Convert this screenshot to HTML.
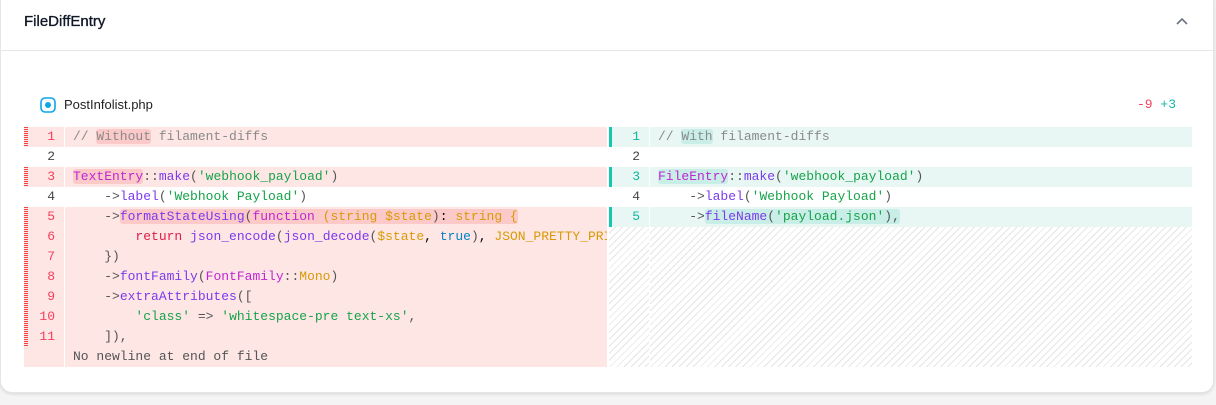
<!DOCTYPE html>
<html><head><meta charset="utf-8"><style>
*{box-sizing:border-box;margin:0;padding:0}
body{width:1216px;height:405px;background:#f4f4f5;font-family:"Liberation Sans",sans-serif;position:relative;overflow:hidden}
.card{position:absolute;left:0;top:-10px;width:1214px;height:403px;background:#fff;border-radius:12px;box-shadow:0 1px 3px rgba(0,0,0,.12);border:1px solid #e5e5e5}
.title{position:absolute;left:24px;top:12px;font-size:15px;color:#111827;-webkit-text-stroke:0.35px #111827}
.hr{position:absolute;left:0;right:0;top:50px;border-top:1px solid #e5e7eb}
.mono{font-family:"Liberation Mono",monospace;font-size:13px}
.row{position:absolute;height:20px;line-height:20px;white-space:pre}
.num{position:absolute;text-align:right;height:20px;line-height:20px;font-family:"Liberation Mono",monospace;font-size:13px}
.c{color:#8a8a8a}.p{color:#c026d3}.v{color:#7c3aed}.g{color:#16a34a}.o{color:#d99a06}.r{color:#e11d48}.b{color:#0284c7}.d{color:#555}
.hl{background:#fcc9c9;border-radius:3px}.hg{background:#c8eee7;border-radius:3px}
.hatch{position:absolute;background:repeating-linear-gradient(135deg,#fff 0 4px,#e5e5e5 4px 5px)}
</style></head><body>
<div class="card"></div>
<div class="title" style="top:13px">FileDiffEntry</div>
<svg style="position:absolute;left:1175px;top:15px" width="14" height="12"><path d="M2 9 L7 4 L12 9" stroke="#6b7280" stroke-width="1.6" fill="none"/></svg>
<div class="hr"></div>
<svg style="position:absolute;left:40px;top:97px" width="16" height="16"><rect x="1" y="1" width="14" height="14" rx="4" fill="none" stroke="#0ea5e9" stroke-width="1.6"/><circle cx="8" cy="8" r="3" fill="#0ea5e9"/></svg>
<div style="position:absolute;left:64px;top:97px;font-size:13px;color:#222">PostInfolist.php</div>
<div class="mono" style="position:absolute;left:1137px;top:97px"><span style="color:#f43f5e">-9</span> <span style="color:#14b8a6">+3</span></div>

<div id="L"></div>
<script>
var L=[1,0,1,0,1,1,1,1,1,1,1,1];
var h='';
for(var i=0;i<12;i++){var y=127+i*20;
 if(L[i]){h+='<div style="position:absolute;left:24px;top:'+y+'px;width:40px;height:20px;background:#fde6e4"></div><div style="position:absolute;left:65px;top:'+y+'px;width:542px;height:20px;background:#fde6e4"></div>';
 if(i<11)h+='<div style="position:absolute;left:24px;top:'+y+'px;width:4px;height:20px;background:repeating-linear-gradient(#ef4444 0 1px,#fde6e4 1px 2px)"></div>';}
}
var R=[1,0,1,0,1];
for(var i=0;i<5;i++){var y=127+i*20;if(R[i])h+='<div style="position:absolute;left:609px;top:'+y+'px;width:40px;height:20px;background:#e8f7f4"></div><div style="position:absolute;left:650px;top:'+y+'px;width:542px;height:20px;background:#e8f7f4"></div><div style="position:absolute;left:609px;top:'+y+'px;width:3px;height:20px;background:#14c8b0"></div>';}
h+='<div class="hatch" style="left:609px;top:227px;width:40px;height:140px"></div><div class="hatch" style="left:650px;top:227px;width:542px;height:140px"></div>';
for(var i=0;i<11;i++){h+='<div class="num" style="left:24px;width:31px;top:'+(127+i*20)+'px;color:'+(L[i]?'#f43f5e':'#444')+'">'+(i+1)+'</div>';}
for(var i=0;i<5;i++){h+='<div class="num" style="left:609px;width:31px;top:'+(127+i*20)+'px;color:'+(R[i]?'#0fb5a0':'#444')+'">'+(i+1)+'</div>';}
document.getElementById('L').innerHTML=h;
</script>
<div class="mono" style="position:absolute;left:73px;top:127px;width:534px;overflow:hidden;height:240px">
<div class="row" style="top:0"><span class="c">// <span class="hl">Without</span> filament-diffs</span></div>
<div class="row" style="top:40px"><span class="p hl">TextEntry</span><span class="d">::</span><span class="v">make</span><span class="d">(</span><span class="g">'webhook_payload'</span><span class="d">)</span></div>
<div class="row" style="top:60px"><span class="d">    -></span><span class="v">label</span><span class="d">(</span><span class="g">'Webhook Payload'</span><span class="d">)</span></div>
<div class="row" style="top:80px"><span class="d">    -></span><span class="hl"><span class="v">formatStateUsing</span><span class="d">(</span><span class="p">function</span> <span class="o">(string $state</span><span class="d">)</span>: <span class="o">string {</span></span></div>
<div class="row" style="top:100px">        <span class="r">return</span> <span class="v">json_encode</span><span class="d">(</span><span class="v">json_decode</span><span class="d">(</span><span class="o">$state</span>, <span class="b">true</span><span class="d">)</span>, <span class="o">JSON_PRETTY_PRINT</span></div>
<div class="row d" style="top:120px">    })</div>
<div class="row" style="top:140px"><span class="d">    -></span><span class="v">fontFamily</span><span class="d">(</span><span class="p">FontFamily</span><span class="d">::</span><span class="o">Mono</span><span class="d">)</span></div>
<div class="row" style="top:160px"><span class="d">    -></span><span class="v">extraAttributes</span><span class="d">([</span></div>
<div class="row" style="top:180px">        <span class="g">'class'</span> <span class="d">=></span> <span class="g">'whitespace-pre text-xs'</span><span class="d">,</span></div>
<div class="row d" style="top:200px">    ]),</div>
<div class="row d" style="top:220px">No newline at end of file</div>
</div>
<div class="mono" style="position:absolute;left:658px;top:127px;width:534px;height:100px">
<div class="row" style="top:0"><span class="c">// <span class="hg">With</span> filament-diffs</span></div>
<div class="row" style="top:40px"><span class="p hg">FileEntry</span><span class="d">::</span><span class="v">make</span><span class="d">(</span><span class="g">'webhook_payload'</span><span class="d">)</span></div>
<div class="row" style="top:60px"><span class="d">    -></span><span class="v">label</span><span class="d">(</span><span class="g">'Webhook Payload'</span><span class="d">)</span></div>
<div class="row" style="top:80px"><span class="d">    -></span><span class="hg"><span class="v">fileName</span><span class="d">(</span><span class="g">'payload.json'</span><span class="d">),</span></span></div>
</div>
</body></html>
